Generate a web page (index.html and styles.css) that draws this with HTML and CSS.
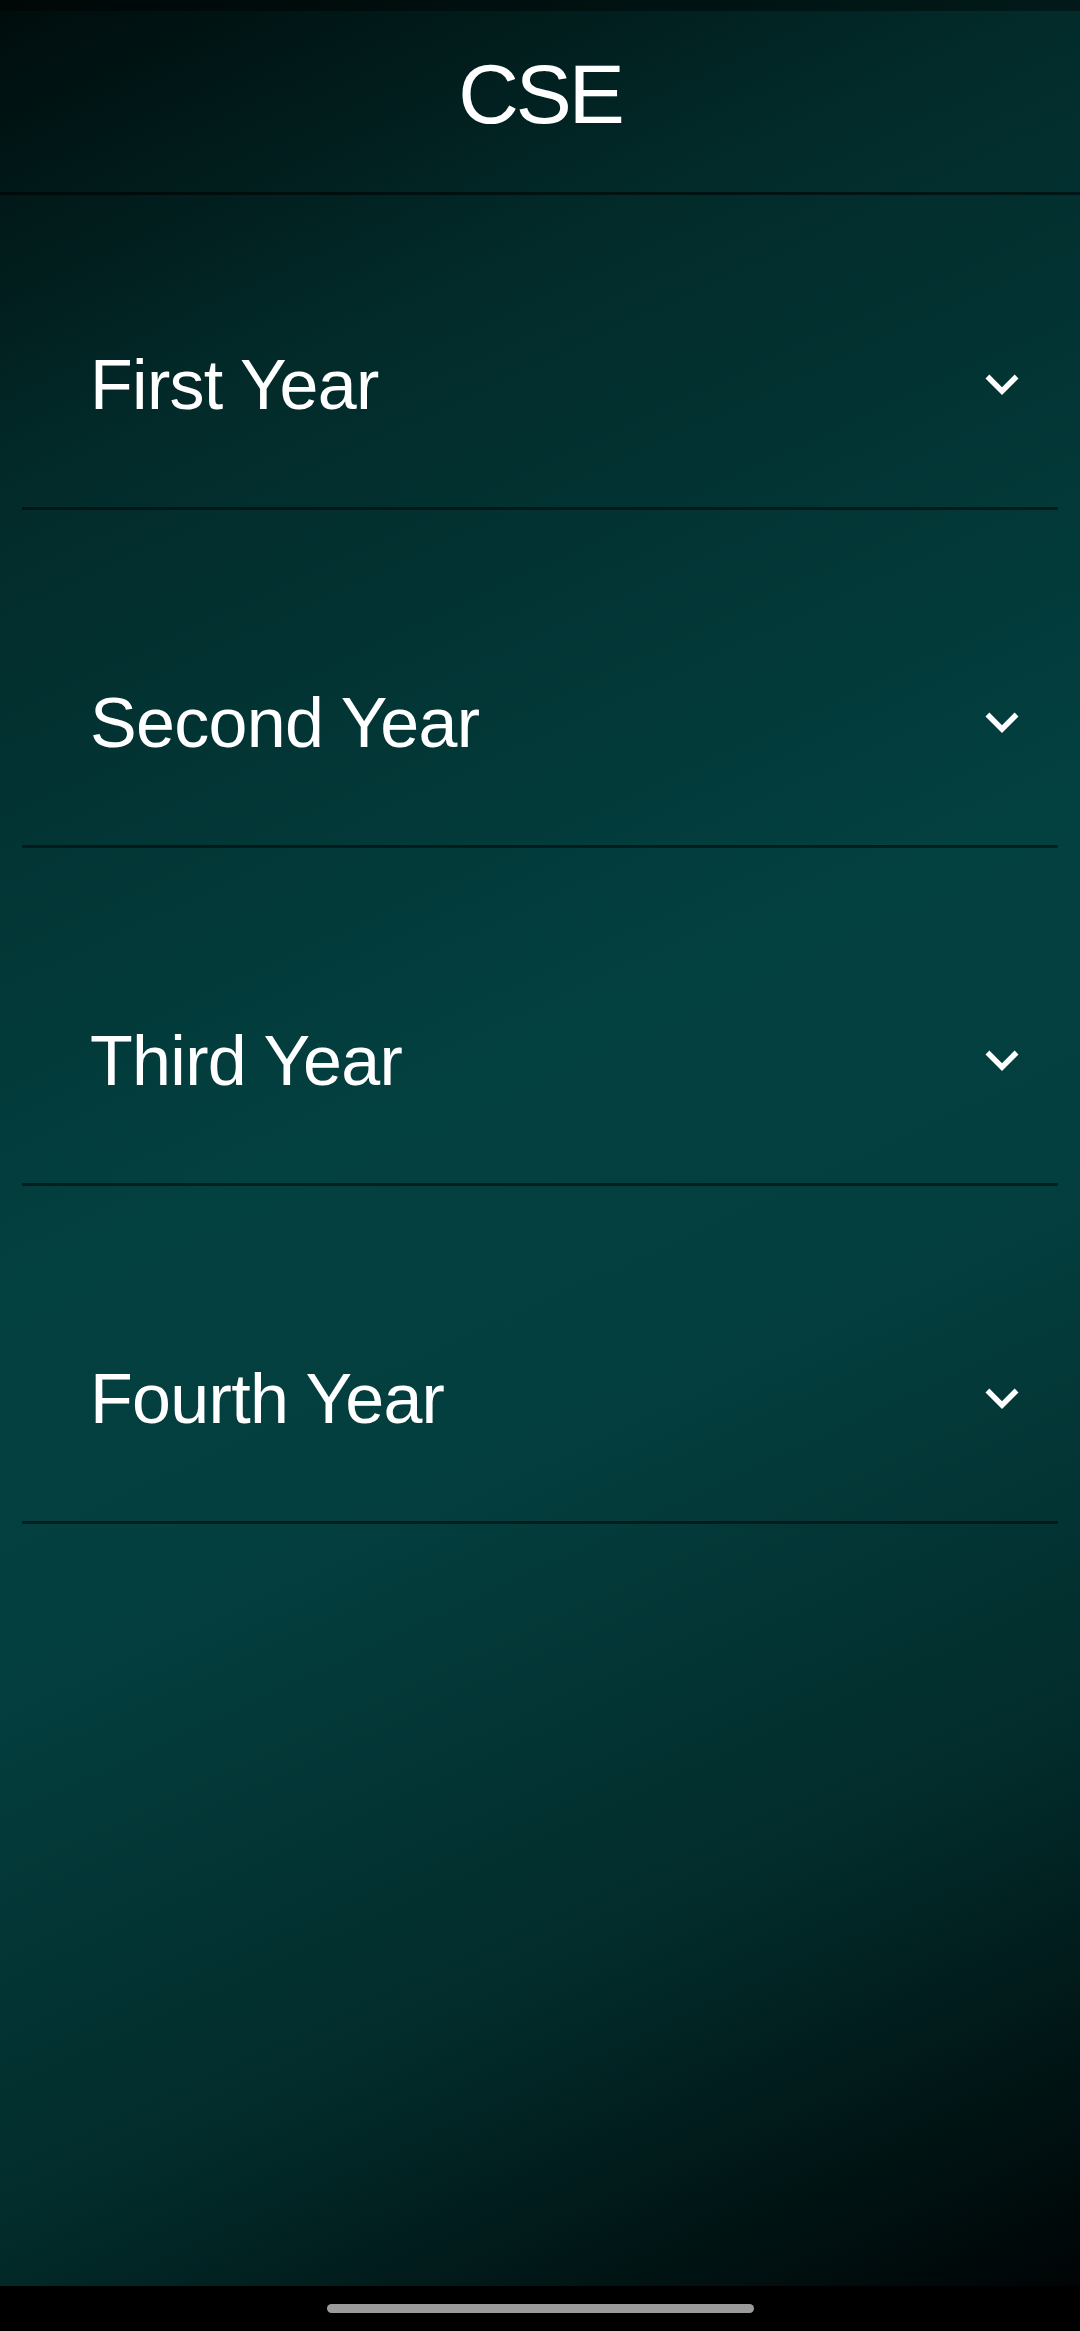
FILE: index.html
```html
<!DOCTYPE html>
<html lang="en">
<head>
<meta charset="utf-8">
<title>CSE</title>
<link rel="stylesheet" href="styles.css">
</head>
<body>
<div class="screen">
  <div class="status-bar"></div>
  <header class="app-bar">
    <h1 class="title">CSE</h1>
  </header>
  <ul class="years">
    <li class="year year--first">
      <span class="year-label">First Year</span>
      <svg class="chevron" viewBox="0 0 24 24" width="66" height="66"><path d="M16.59 8.59L12 13.17 7.41 8.59 6 10l6 6 6-6z" fill="#fff"/></svg>
    </li>
    <li class="year">
      <span class="year-label">Second Year</span>
      <svg class="chevron" viewBox="0 0 24 24" width="66" height="66"><path d="M16.59 8.59L12 13.17 7.41 8.59 6 10l6 6 6-6z" fill="#fff"/></svg>
    </li>
    <li class="year">
      <span class="year-label">Third Year</span>
      <svg class="chevron" viewBox="0 0 24 24" width="66" height="66"><path d="M16.59 8.59L12 13.17 7.41 8.59 6 10l6 6 6-6z" fill="#fff"/></svg>
    </li>
    <li class="year">
      <span class="year-label">Fourth Year</span>
      <svg class="chevron" viewBox="0 0 24 24" width="66" height="66"><path d="M16.59 8.59L12 13.17 7.41 8.59 6 10l6 6 6-6z" fill="#fff"/></svg>
    </li>
  </ul>
</div>
<nav class="nav-bar"><div class="handle"></div></nav>
</body>
</html>
```

FILE: styles.css
```css
* { box-sizing: border-box; }
html, body {
  margin: 0;
  padding: 0;
  background: #000;
}
body {
  width: 1080px;
  height: 2331px;
  overflow: hidden;
  font-family: "Liberation Sans", Arial, sans-serif;
  color: #fff;
}
.screen {
  height: 2286px;
  display: flex;
  flex-direction: column;
  background: linear-gradient(155deg,
    #000c0c 0%,
    #022b2a 18%,
    #034040 46%,
    #043f3f 60%,
    #022c2b 80%,
    #000405 100%);
}
.status-bar {
  height: 11px;
  background: rgba(0, 0, 0, 0.4);
}
.app-bar {
  height: 184px;
  border-bottom: 3px solid rgba(0, 0, 0, 0.55);
  display: flex;
  justify-content: center;
  padding-top: 41px;
}
.title {
  margin: 0;
  font-size: 84px;
  line-height: 85px;
  font-weight: 400;
  letter-spacing: -3px;
}
.years {
  list-style: none;
  margin: 0 22px;
  padding: 0;
}
.year {
  height: 338px;
  border-bottom: 3px solid rgba(0, 0, 0, 0.5);
  display: flex;
  align-items: center;
  justify-content: space-between;
  padding: 91px 23px 0 68px;
}
.year--first {
  height: 315px;
  padding-top: 68px;
}
.year-label {
  font-size: 70px;
  line-height: 70px;
  letter-spacing: -0.7px;
}
.chevron {
  display: block;
  margin-top: -2px;
}
.nav-bar {
  height: 45px;
  display: flex;
  justify-content: center;
  padding-top: 18px;
}
.handle {
  width: 427px;
  height: 9px;
  border-radius: 5px;
  background: #9b9b9b;
}
```
